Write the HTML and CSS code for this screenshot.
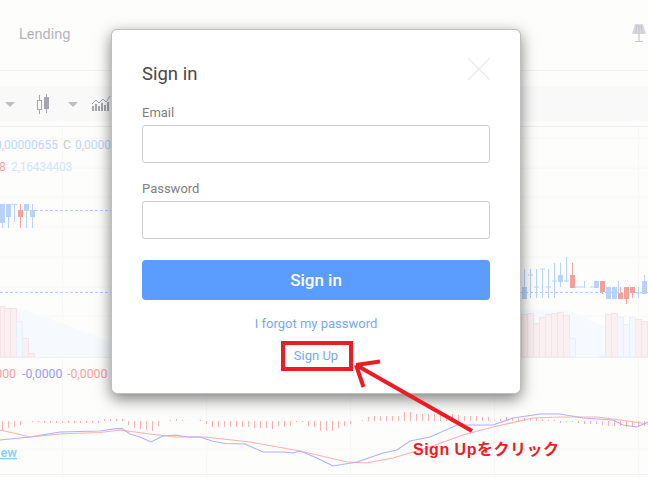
FILE: index.html
```html
<!DOCTYPE html>
<html lang="en">
<head>
    <meta charset="UTF-8">
    <meta name="viewport" content="width=device-width, initial-scale=1.0">
    <title>Sign in</title>
    <link rel="stylesheet" href="styles.css">
</head>
<body>
    <div class="page">
        <header class="topbar">
            <a class="nav-link">Lending</a>
            <svg class="lamp" width="14" height="18" viewBox="0 0 14 18">
                <path class="lamp-shade" d="M3 0H11L14 10H0Z"/>
                <path class="lamp-lines" d="M5 1L3.500 10M7 1V10M9 1L10.500 10M7 10V17M3 17.500H11"/>
            </svg>
        </header>

        <div class="toolbar-wrap">
            <div class="toolbar">
                <span class="caret caret-first"></span>
                <svg class="tool-candle" width="12" height="20" viewBox="0 0 12 20">
                    <path class="tool-line" d="M2.500 1V20M9.500 0V19"/>
                    <rect class="tool-hollow" x="0.500" y="6.500" width="4" height="9"/>
                    <rect class="tool-solid" x="7" y="3" width="5" height="12"/>
                </svg>
                <span class="caret caret-second"></span>
                <svg class="tool-bars" width="19" height="16" viewBox="0 0 19 16">
                    <path class="tool-solid" d="M0 10H2V15H0ZM3 8H5V15H3ZM6 10H8V15H6ZM9 7H11V15H9ZM12 9H14V15H12ZM15 6H17V15H15Z"/>
                    <path class="tool-trend" d="M0 8L4 4L7 7L11 3L14 6L18 0"/>
                </svg>
            </div>
        </div>

        <svg class="chart" width="648" height="350" viewBox="0 127 648 350">
            <path class="grid" d="M0 138H648M0 168H648M0 197H648M0 227H648M0 257H648M0 287H648M0 316H648M0 346H648M0 449H648M62.500 127V477M206.500 127V477M350.500 127V477M494.500 127V477M638.500 127V477"/>
            <path class="grid-strong" d="M0 357.500H648M0 474.500H648"/>

            <path class="area" d="M0 305L17 308L60 322L110 342L520 342V309L567 310L603 326L648 325V357H0Z"/>

            <path class="vol-red" d="M0.500 306.500H4.500V357H0.500ZM4.500 308.500H10.500V357H4.500ZM10.500 308.500H16.500V357H10.500ZM22.500 338.500H28.500V357H22.500ZM28.500 353.500H34.500V357H28.500ZM521.500 314.500H527.500V357H521.500ZM527.500 313.500H533.500V357H527.500ZM533.500 323.500H539.500V357H533.500ZM539.500 317.500H545.500V357H539.500ZM545.500 314.500H551.500V357H545.500ZM551.500 313.500H557.500V357H551.500ZM557.500 312.500H563.500V357H557.500ZM563.500 315.500H569.500V357H563.500ZM605.500 314.500H611.500V357H605.500ZM611.500 313.500H617.500V357H611.500ZM635.500 319.500H641.500V357H635.500ZM641.500 321.500H647.500V357H641.500Z"/>
            <path class="vol-blue" d="M16.500 321.500H22.500V357H16.500ZM569.500 338.500H575.500V357H569.500ZM599.500 356H605.500V357H599.500ZM617.500 317.500H623.500V357H617.500ZM623.500 324.500H629.500V357H623.500ZM629.500 317.500H635.500V357H629.500Z"/>

            <path class="dash" d="M35 210.500H112M0 292.500H112M520 292.500H648"/>

            <path class="wick-blue" d="M2.500 204V228M8.500 204V228M14.500 204V222M12 204.500H17M26.500 204V228M32.500 204V228M524.500 269V298M530.500 269V298M528 275H533M536.500 269V298M534 287H539M542.500 269V298M540 269H545M548.500 269V298M546 287H551M554.500 263V298M552 281H557M560.500 263V287M566.500 257V282M564 281H569M574 287H584M584.500 281V288M590 287H596M618.500 281V298M638.500 287V298M636 293H641M644.500 275V294"/>
            <path class="wick-red" d="M20.500 204V228M572.500 263V288M602.500 281V294M620.500 287V299M626.500 287V304M632.500 287V298"/>
            <path class="body-blue" d="M0 204H5V223H0ZM6 204H11V217H6ZM24 204H29V211H24ZM30 210H35V217H30ZM522 287H527V299H522ZM558 275H563V282H558ZM594 281H599V288H594ZM606 287H611V299H606ZM612 287H617V299H612ZM642 281H647V294H642Z"/>
            <path class="body-red" d="M18 210H23V217H18ZM570 275H575V288H570ZM600 281H605V292H600ZM618 293H623V299H618ZM624 287H629V299H624ZM630 287H635V293H630Z"/>

            <path class="tick" d="M2.500 421V430M8.500 421V428M14.500 421V427M20.500 421V425M32.500 421V422M38.500 421V422M44.500 421V423M50.500 421V423M56.500 421V423M62.500 421V423M68.500 421V423M74.500 421V423M80.500 421V423M86.500 421V423M92.500 421V423M98.500 421V423M104.500 419V421M110.500 419V421M116.500 419V421M122.500 419V421M128.500 421V425M134.500 421V428M140.500 421V429M146.500 421V430M152.500 421V431M158.500 421V426M170.500 420V421M176.500 419V421M182.500 420V421M200.500 420V421M206.500 421V424M212.500 421V427M218.500 421V427M224.500 421V427M230.500 421V427M236.500 421V427M242.500 421V427M248.500 421V427M254.500 421V428M260.500 421V428M266.500 421V428M272.500 421V429M278.500 421V426M284.500 421V427M290.500 421V426M296.500 421V422M302.500 421V422M308.500 421V426M314.500 421V427M320.500 421V431M326.500 421V431M332.500 421V431M338.500 421V428M344.500 421V426M350.500 421V424M362.500 420V421M368.500 417V421M374.500 416V421M380.500 416V421M386.500 416V421M392.500 416V421M398.500 416V421M404.500 412V421M410.500 412V421M416.500 414V421M422.500 414V421M428.500 414V421M434.500 414V421M440.500 415V421M446.500 414V421M452.500 414V421M458.500 415V421M464.500 416V421M470.500 416V421M476.500 416V421M482.500 417V421M488.500 417V421M494.500 420V421M500.500 419V421M506.500 417V421M512.500 418V421M518.500 418V421M524.500 418V421M530.500 418V421M536.500 418V421M542.500 419V421M548.500 420V421M554.500 420V421M560.500 421V423M566.500 421V422M572.500 421V422M578.500 421V423M584.500 421V424M590.500 421V424M596.500 421V424M602.500 421V425M608.500 421V426M614.500 421V426M620.500 421V426M626.500 421V427M632.500 421V427M638.500 421V427M644.500 421V426"/>

            <polyline class="line-red" points="0,430 30,437 60,434 100,432.500 120,430 150,434 175,437 205,437 250,442 300,451 346,461.700 366,463 393,458 427,448 463,435 493,427 533,418 560,417 597,417 620,420 648,424"/>
            <polyline class="line-blue" points="0,440 30,437 60,432 100,431 115,428.700 122,428.500 130,434 140,437 151,442 163,436 175,435 188,437 200,437 212,441 225,443.500 245,444 263,452 283,452 293,453 300,451 317,458 333,466 357,462 383,453 397,450 410,441 430,437 457,425 493,425 513,418 540,414 560,414 583,418 613,420 623,425 637,427 648,422"/>

            <text class="legend-blue" x="58" y="149" text-anchor="end">0,00000655</text>
            <text class="legend-gray" x="63" y="149">C</text>
            <text class="legend-blue" x="75" y="149">0,0000</text>
            <text class="legend-red" x="-1" y="171">8</text>
            <text class="legend-pale" x="11" y="171">2,16434403</text>
            <text class="macd-red" x="16" y="378" text-anchor="end">000</text>
            <text class="macd-blue" x="22" y="378">-0,0000</text>
            <text class="macd-red" x="67" y="378">-0,0000</text>
            <text class="view-link" x="17" y="457" text-anchor="end">view</text>
        </svg>

        <div class="modal">
            <svg class="modal-close" width="24" height="24" viewBox="0 0 24 24">
                <path d="M1 1L23 23M23 1L1 23"/>
            </svg>
            <h2 class="modal-title">Sign in</h2>
            <div class="form-group">
                <label for="email">Email</label>
                <input type="text" id="email">
            </div>
            <div class="form-group">
                <label for="password">Password</label>
                <input type="password" id="password">
            </div>
            <button class="btn-signin">Sign in</button>
            <a class="forgot">I forgot my password</a>
            <a class="signup">Sign Up</a>
        </div>

        <!-- red markup drawn on top of the screenshot -->
        <div class="mark-box"></div>
        <svg class="mark-arrow" width="648" height="477" viewBox="0 0 648 477">
            <path d="M472 431L356 365M356 365L380 361.500M356 365L363.500 387"/>
        </svg>
        <div class="mark-text">Sign Upをクリック</div>
    </div>
</body>
</html>
```

FILE: styles.css
```css
* {
    box-sizing: border-box;
}
html, body {
    margin: 0;
    padding: 0;
}
body {
    font-family: Roboto, "Liberation Sans", sans-serif;
    background-color: #fdfdfc;
}
.page {
    position: relative;
    width: 648px;
    height: 477px;
    overflow: hidden;
}

/* top bar */
.topbar {
    height: 71px;
    padding: 0 2px 0 19px;
    display: flex;
    justify-content: space-between;
    align-items: flex-start;
    border-bottom: 1px solid #f0f0f6;
}
.nav-link {
    margin-top: 26px;
    font-size: 14.500px;
    line-height: 18px;
    color: #b4b4ba;
}
.lamp {
    margin-top: 24px;
}
.lamp-shade {
    fill: #d8d8de;
}
.lamp-lines {
    fill: none;
    stroke: #c6c6ce;
    stroke-width: 1.2;
}

/* toolbar */
.toolbar-wrap {
    height: 56px;
    padding-top: 15px;
    border-bottom: 1px solid #eeeef4;
}
.toolbar {
    height: 35px;
    display: flex;
    align-items: center;
    padding-left: 5px;
    background-color: #f9f9f9;
}
.caret {
    width: 0;
    height: 0;
    margin-top: 2px;
    border-left: 5px solid transparent;
    border-right: 5px solid transparent;
    border-top: 5px solid #bdbdc2;
}
.caret-first {
    margin-right: 22px;
}
.tool-candle {
    margin-right: 19px;
}
.caret-second {
    margin-right: 14px;
}
.tool-line {
    stroke: #a6a6ae;
    fill: none;
}
.tool-hollow {
    fill: #f9f9f9;
    stroke: #a6a6ae;
}
.tool-solid {
    fill: #a6a6ae;
}
.tool-trend {
    fill: none;
    stroke: #a6a6ae;
}

/* chart */
.chart {
    display: block;
}
.grid {
    fill: none;
    stroke: #f8f8f8;
}
.grid-strong {
    fill: none;
    stroke: #f0f0f2;
}
.area {
    fill: #f6faff;
}
.vol-red {
    fill: #faf0f1;
    stroke: #f6e3e5;
}
.vol-blue {
    fill: #f2f8fe;
    stroke: #e4f0fb;
}
.dash {
    fill: none;
    stroke: #b3d0fb;
    stroke-dasharray: 3 2;
}
.wick-blue {
    fill: none;
    stroke: #b7d2fb;
}
.wick-red {
    fill: none;
    stroke: #f6a5a1;
}
.body-blue {
    fill: #b7d2fb;
}
.body-red {
    fill: #f6a09c;
}
.tick {
    fill: none;
    stroke: #ffb0b0;
}
.line-red {
    fill: none;
    stroke: #ffb0b0;
    stroke-width: 1.1;
}
.line-blue {
    fill: none;
    stroke: #b0b0fa;
    stroke-width: 1.1;
}
.legend-blue,
.legend-gray,
.legend-red {
    font-size: 12px;
}
.legend-pale {
    font-size: 12px;
    letter-spacing: -0.200px;
}
.legend-blue {
    fill: #bdd6fb;
}
.legend-gray {
    fill: #c8c8cc;
}
.legend-red {
    fill: #f8a5a2;
}
.legend-pale {
    fill: #cfe6fb;
}
.macd-red,
.macd-blue {
    font-size: 12.300px;
}
.macd-red {
    fill: #f8a0a0;
}
.macd-blue {
    fill: #9c9cf2;
}
.view-link {
    font-size: 13px;
    font-weight: 500;
    fill: #80d0f2;
    text-decoration: underline;
}

/* sign in dialog */
.modal {
    position: absolute;
    left: 111px;
    top: 29px;
    width: 410px;
    height: 365px;
    padding: 33px 30px 0;
    display: flex;
    flex-direction: column;
    background-color: #fff;
    border: 1px solid rgba(0, 0, 0, 0.25);
    border-radius: 6px;
    box-shadow: 0 5px 15px rgba(0, 0, 0, 0.5);
}
.modal-close {
    position: absolute;
    left: 355px;
    top: 27px;
}
.modal-close path {
    fill: none;
    stroke: #ececec;
    stroke-width: 1.5;
}
.modal-title {
    margin: 0 0 19px;
    font-size: 18.500px;
    line-height: 22px;
    font-weight: 400;
    color: #484848;
}
.form-group {
    margin-bottom: 17px;
}
.form-group label {
    display: block;
    margin-bottom: 3px;
    font-size: 13px;
    line-height: 18px;
    color: #808080;
}
.form-group input {
    display: block;
    width: 100%;
    height: 38px;
    border: 1px solid #ccc;
    border-radius: 3px;
    background-color: #fff;
}
.btn-signin {
    height: 40px;
    margin-top: 4px;
    border: 0;
    border-radius: 4px;
    background-color: #5a9cff;
    color: #fff;
    font-family: Roboto, "Liberation Sans", sans-serif;
    font-size: 17px;
    font-weight: 500;
}
.forgot,
.signup {
    text-align: center;
    font-size: 13px;
    line-height: 18px;
    color: #74a9f6;
}
.forgot {
    margin-top: 15px;
}
.signup {
    margin-top: 14px;
}

/* red markup */
.mark-box {
    position: absolute;
    left: 281px;
    top: 341px;
    width: 72px;
    height: 30px;
    border: 4px solid #ed1c24;
}
.mark-arrow {
    position: absolute;
    left: 0;
    top: 0;
}
.mark-arrow path {
    fill: none;
    stroke: #ed1c24;
    stroke-width: 4;
}
.mark-text {
    position: absolute;
    left: 413px;
    top: 441px;
    font-family: "Liberation Sans", "Noto Sans CJK JP", sans-serif;
    font-size: 16px;
    letter-spacing: 0.500px;
    line-height: 18px;
    font-weight: 700;
    color: #ed1c24;
    white-space: nowrap;
}
```
